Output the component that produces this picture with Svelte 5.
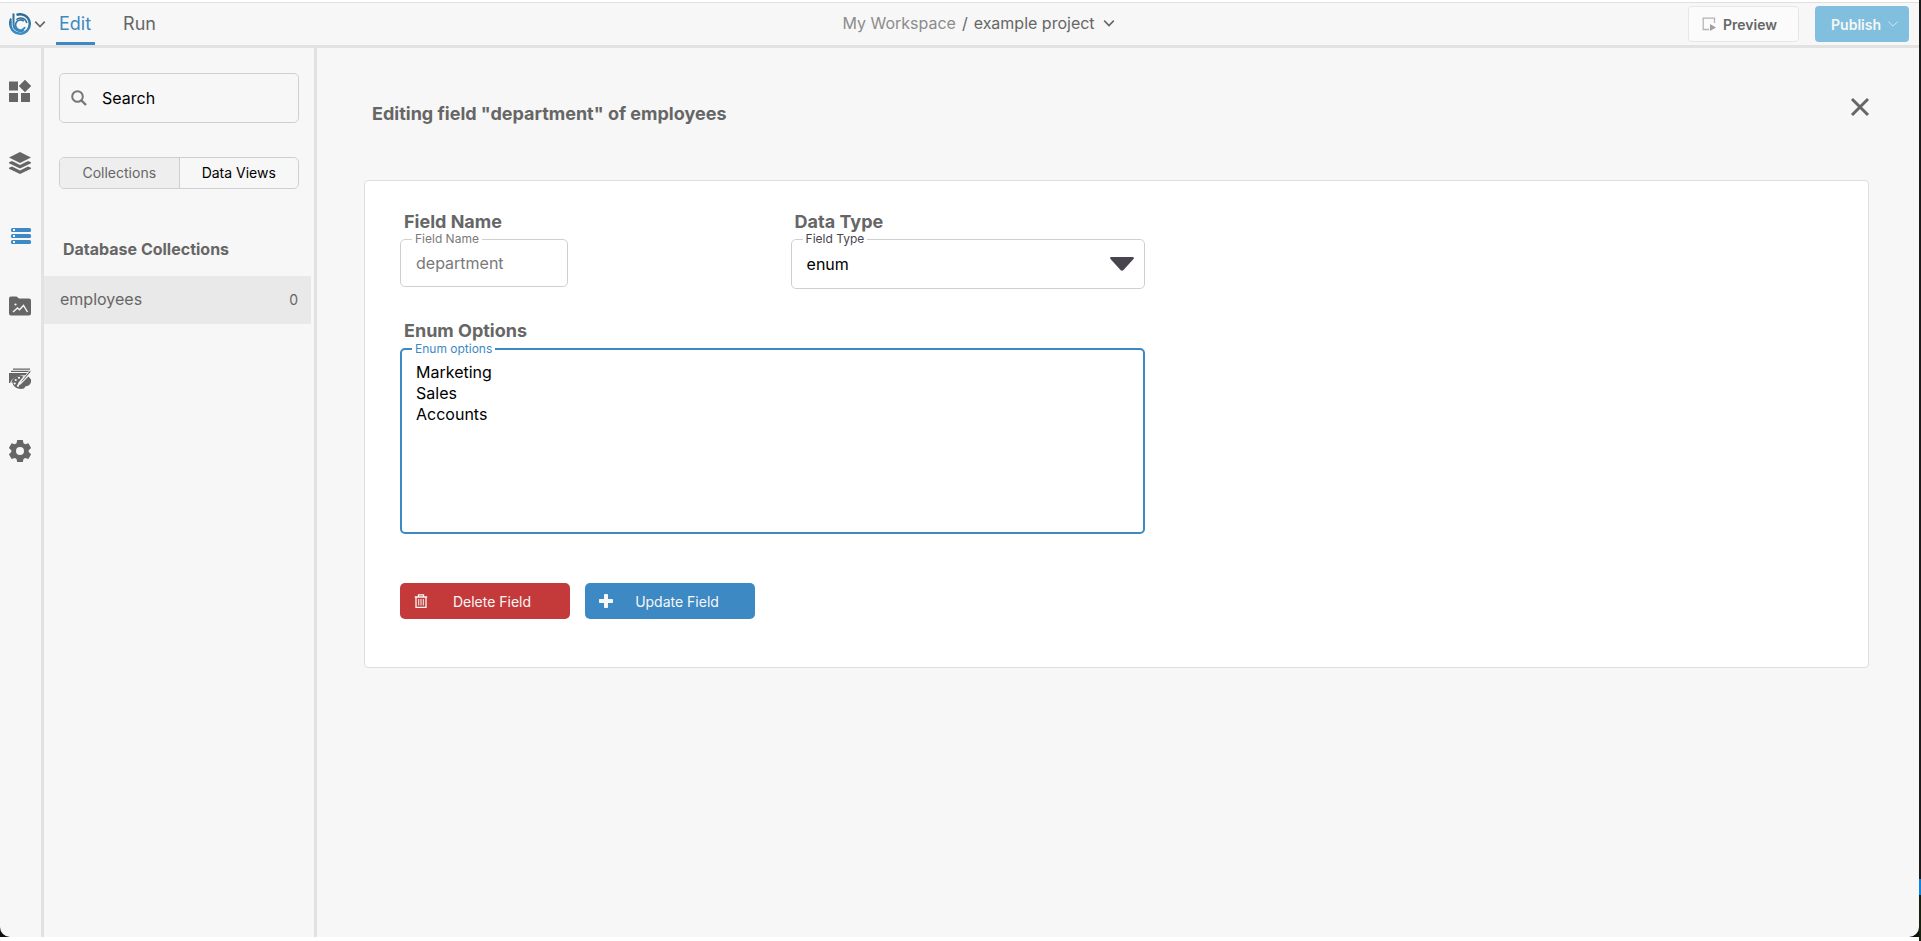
<script lang="ts">
  type RailItem = 'components' | 'layers' | 'database' | 'media' | 'design' | 'settings'
  type Tab = 'Edit' | 'Run'
  type DataTab = 'Collections' | 'Data Views'

  const railItems: RailItem[] = ['components', 'layers', 'database', 'media', 'design', 'settings']
  const tabs: Tab[] = ['Edit', 'Run']
  const dataTabs: DataTab[] = ['Collections', 'Data Views']
  const fieldTypes = ['enum', 'text', 'number', 'boolean', 'date']
  const collections = [{ name: 'employees', count: 0 }]

  let activeRail = $state<RailItem>('database')
  let activeTab = $state<Tab>('Edit')
  let dataTab = $state<DataTab>('Collections')
  let selected = $state('employees')
  let search = $state('')
  let fieldType = $state('enum')
  let fieldName = $state('department')
  let enumOptions = $state('Marketing\nSales\nAccounts')
</script>

{#snippet chevron(size: number)}
  <svg width={size} height={size} viewBox="0 0 12 12" fill="none" stroke="currentColor" stroke-width="1.6">
    <path d="M1.2 3.6 6 8.6l4.8-5" />
  </svg>
{/snippet}

<div class="desktop">
  <div class="stage">
    <div class="window">
      <header class="topbar">
        <div class="topbar-left">
          <button class="logo" aria-label="Main menu">
            <svg width="24" height="24" viewBox="0 0 24 24" fill="none">
              <defs>
                <linearGradient id="brand" gradientUnits="userSpaceOnUse" x1="0" y1="1" x2="0" y2="23">
                  <stop offset="0" stop-color="#2b6690" />
                  <stop offset="1" stop-color="#3d8fca" />
                </linearGradient>
              </defs>
              <g stroke="url(#brand)">
                <path d="M8.500 2.900A9.700 9.700 0 1 1 2.800 9" stroke-width="2.500" />
                <path d="M5.500 1.500v11a6.900 6.900 0 0 0 10.500 5.600" stroke-width="2" />
                <path d="M3 6.500A9.700 9.700 0 0 0 2.400 13" stroke-width="2" />
                <path d="M8.300 7.800A6.300 6.300 0 0 1 18.800 11" stroke-width="1.500" />
                <path d="M17 15.200a5 5 0 1 1-1.200-6" stroke-width="1.700" />
              </g>
            </svg>
            {@render chevron(12)}
          </button>
          <nav class="tabs">
            {#each tabs as t (t)}
              <button class:active={activeTab === t} onclick={() => (activeTab = t)}>{t}</button>
            {/each}
          </nav>
        </div>

        <div class="crumbs">
          <a href="#workspace">My Workspace</a>
          <span>/</span>
          <button>example project {@render chevron(12)}</button>
        </div>

        <div class="topbar-right">
          <button class="preview">
            <svg width="14" height="14" viewBox="0 0 14 14">
              <path d="M12.500 6V1.200H1.200v11.300H7" fill="none" stroke="#b4b4b4" stroke-width="1.300" />
              <path d="M8 7l6 3.500L8 14z" fill="#a0a0a0" />
            </svg>
            Preview
          </button>
          <button class="publish">
            Publish
            <svg width="10" height="10" viewBox="0 0 10 10" fill="none" stroke="#cfe8f3" stroke-width="1">
              <path d="M.4 2.600 5 7.200l4.600-4.600" />
            </svg>
          </button>
        </div>
      </header>

      <div class="body">
        <nav class="rail">
          {#each railItems as item (item)}
            <button class:active={activeRail === item} aria-label={item} onclick={() => (activeRail = item)}>
              <svg width="24" height="24" viewBox="0 0 24 24" fill="currentColor">
                {#if item === 'components'}
                  <path d="M1 2.500h9v9H1zM1 14h9v9H1zM13 14h9v9h-9zM17 .8l6.200 6.200-6.200 6.200L10.800 7z" />
                {:else if item === 'layers'}
                  <path d="M12 1l11 5.500-11 5.500L1 6.500z" />
                  <path d="M1 11.300l3-1.300 8 4 8-4 3 1.300v1L12 17.600 1 12.300z" />
                  <path d="M1 16.800l3-1.300 8 4 8-4 3 1.300v1L12 23 1 17.800z" />
                {:else if item === 'database'}
                  {#each [5, 11, 17] as y (y)}
                    <rect x="3" {y} width="20" height="4" rx="1.500" />
                    <rect x="5" y={y + 1} width="2" height="2" fill="#f7f7f7" />
                  {/each}
                {:else if item === 'media'}
                  <path d="M3 1.500h5.500l2.500 2h10a2 2 0 0 1 2 2v13a2 2 0 0 1-2 2H3a2 2 0 0 1-2-2v-15a2 2 0 0 1 2-2z" />
                  <path d="M5 17l4.500-4 2 1.700 4-4.200 4 6.500" fill="none" stroke="#f7f7f7" stroke-width="1.400" />
                  <circle cx="7.500" cy="9.500" r="1.100" fill="#f7f7f7" />
                {:else if item === 'design'}
                  <path d="M5 1.500h17v1.200H5zM3 3.800h18V5H3zM1 6h18v2.500C9 7.500 3.500 12 2.200 16H1z" />
                  <path d="M3.500 15.500c1-5 7-8 12-6l-5 6-1 3 3-1 8-8 2.500 3c.500 3-1 6-4 6.500-2 .2-1.800 1-3 2.500-5 1.500-11-1-11.500-6z" />
                  <path d="M22.500 2.500L14 13l-2.500 3.500L15 14l8-9z" stroke="#f7f7f7" stroke-width=".9" />
                  <g fill="#f7f7f7">
                    <circle cx="6.700" cy="16.500" r="1.100" />
                    <circle cx="7.700" cy="13" r="1.100" />
                    <circle cx="11" cy="10.800" r="1.100" />
                    <circle cx="10" cy="18.800" r="1.100" />
                  </g>
                {:else}
                  <path
                    fill-rule="evenodd"
                    d="M9.200 1h5.600l.7 3.300 1.700 1 3.200-1 2.700 4.700-2.400 2.200v1.800l2.400 2.200-2.700 4.700-3.200-1-1.700 1-.7 3.100H9.200l-.7-3.100-1.700-1-3.200 1L.9 15.200 3.300 13v-1.800L.9 9l2.700-4.700 3.200 1 1.700-1zM12 8a4 4 0 1 0 0 8 4 4 0 0 0 0-8z"
                  />
                {/if}
              </svg>
            </button>
          {/each}
        </nav>

        <aside class="sidebar">
          <label class="search">
            <svg width="16" height="16" viewBox="0 0 16 16" fill="none" stroke="#777" stroke-width="2">
              <circle cx="6.500" cy="6.500" r="5.300" />
              <path d="M10.500 10.500l4.500 4.500" stroke-width="2.400" />
            </svg>
            <input type="text" placeholder="Search" aria-label="Search" bind:value={search} />
          </label>

          <div class="segmented">
            {#each dataTabs as t (t)}
              <button class:active={dataTab === t} onclick={() => (dataTab = t)}>{t}</button>
            {/each}
          </div>

          <h2>Database Collections</h2>
          <ul>
            {#each collections as c (c.name)}
              <li>
                <button class:active={selected === c.name} onclick={() => (selected = c.name)}>
                  {c.name}
                  <span class="count">{c.count}</span>
                </button>
              </li>
            {/each}
          </ul>
        </aside>

        <main>
          <div class="title">
            <h1>Editing field "department" of employees</h1>
            <button class="close" aria-label="Close">
              <svg width="20" height="20" viewBox="0 0 20 20" fill="none" stroke="currentColor" stroke-width="3">
                <path d="M2 2l16 16M18 2L2 18" />
              </svg>
            </button>
          </div>

          <section class="card">
            <form onsubmit={(e) => e.preventDefault()}>
              <div class="columns">
                <div>
                  <h3>Field Name</h3>
                  <div class="outlined name">
                    <label for="field-name">Field Name</label>
                    <input id="field-name" type="text" bind:value={fieldName} />
                  </div>
                </div>
                <div>
                  <h3>Data Type</h3>
                  <div class="outlined type">
                    <label for="field-type">Field Type</label>
                    <select id="field-type" bind:value={fieldType}>
                      {#each fieldTypes as type (type)}
                        <option>{type}</option>
                      {/each}
                    </select>
                    <svg class="arrow" width="24" height="14" viewBox="0 0 24 14">
                      <path d="M1 0h22q1.500.5.500 2L13.500 13q-1.500 1.500-3 0L.5 2Q-.5.500 1 0z" fill="#49454f" />
                    </svg>
                  </div>
                </div>
              </div>

              <h3>Enum Options</h3>
              <div class="outlined options">
                <label for="enum-options">Enum options</label>
                <textarea id="enum-options" bind:value={enumOptions}></textarea>
              </div>

              <div class="actions">
                <button class="delete" type="button">
                  <svg width="14" height="14" viewBox="0 0 14 14" fill="none" stroke="currentColor">
                    <path d="M.8 3h12.400M4.500 3V.8h5V3M2 3v10.400h10V3" stroke-width="1.300" />
                    <path d="M4.700 5v6.500M7 5v6.500M9.300 5v6.500" />
                  </svg>
                  <span>Delete Field</span>
                </button>
                <button class="update" type="submit">
                  <svg width="14" height="14" viewBox="0 0 14 14" fill="currentColor">
                    <path d="M5 .7Q5 0 5.700 0h2.600Q9 0 9 .7V5h4.300q.7 0 .7.7v2.600q0 .7-.7.7H9v4.300q0 .7-.7.7H5.700Q5 14 5 13.300V9H.7Q0 9 0 8.300V5.700Q0 5 .7 5H5z" />
                  </svg>
                  <span>Update Field</span>
                </button>
              </div>
            </form>
          </section>
        </main>
      </div>
    </div>
  </div>
  <div class="edge"></div>
</div>

<style>
  :global(body) {
    margin: 0;
    background: #fff;
  }
  .desktop {
    display: flex;
    min-height: 100vh;
    font-family: Inter, 'Liberation Sans', sans-serif;
    font-size: 16px;
    color: #666;
  }
  .desktop *,
  .desktop *::before {
    box-sizing: border-box;
  }
  .stage {
    display: flex;
    flex: 1;
    margin-bottom: 4px;
    background: #0b120c;
  }
  .edge {
    width: 2px;
    background: linear-gradient(#1b1b1b 879px, #0a84e0 879px 895px, #14220f 895px);
  }
  .window {
    display: flex;
    flex: 1;
    flex-direction: column;
    background: #f7f7f7;
    border-top: 2px solid #fff;
    border-radius: 0 0 10px 10px;
    overflow: hidden;
  }
  button {
    padding: 0;
    border: 0;
    background: transparent;
    color: inherit;
    font: inherit;
    cursor: pointer;
  }
  svg {
    display: block;
    flex: none;
  }
  h1,
  h2,
  h3 {
    margin: 0;
    font-weight: 700;
  }

  .topbar {
    display: grid;
    grid-template-columns: 1fr auto 1fr;
    height: 46px;
    border-top: 1px solid #e0e0e0;
    border-bottom: 3px solid #e2e2e2;
  }
  .topbar-left {
    display: flex;
    padding-left: 8px;
  }
  .logo {
    display: flex;
    align-items: center;
    gap: 2px;
    margin-right: 10px;
  }
  .tabs {
    display: flex;
    gap: 16px;
  }
  .tabs button {
    padding: 0 4px 2px 3px;
    border-bottom: 3px solid transparent;
    border-top: 3px solid transparent;
    font-size: 18px;
  }
  .tabs button + button {
    padding: 0 12px 2px;
  }
  .tabs button.active {
    border-bottom-color: #3d89c4;
    color: #3d89c4;
  }
  .crumbs {
    display: flex;
    align-items: center;
    gap: 6px;
    padding: 0 0 2px 38px;
  }
  .crumbs a {
    color: #8c8c8c;
    text-decoration: none;
  }
  .crumbs button {
    display: flex;
    align-items: center;
    gap: 8px;
  }
  .topbar-right {
    display: flex;
    align-items: center;
    justify-content: flex-end;
    gap: 16px;
    padding-right: 10px;
    font-size: 14px;
    font-weight: 600;
  }
  .preview,
  .publish {
    display: flex;
    align-items: center;
    height: 36px;
    border-radius: 4px;
  }
  .preview {
    gap: 7px;
    padding: 0 21px 0 13px;
    border: 1px solid #e6e6e6;
    background: #fbfbfb;
  }
  .publish {
    gap: 7px;
    padding: 0 11px 0 16px;
    background: #80bfdd;
    color: #f7f7f7;
  }

  .body {
    display: flex;
    flex: 1;
  }
  .rail {
    display: flex;
    flex-direction: column;
    width: 44px;
    padding-top: 7px;
    border-right: 3px solid #e2e2e2;
  }
  .rail button {
    display: flex;
    align-items: center;
    height: 72px;
    padding-left: 8px;
  }
  .rail button.active {
    color: #3d89c4;
  }
  .sidebar {
    width: 273px;
    padding: 25px 3px 0 0;
    border-right: 3px solid #e2e2e2;
  }
  .search {
    display: flex;
    align-items: center;
    gap: 15px;
    height: 50px;
    margin: 0 12px 0 15px;
    padding: 0 11px;
    border: 1px solid #cfcfcf;
    border-radius: 5px;
  }
  .search input {
    flex: 1;
    min-width: 0;
    padding: 0;
    border: 0;
    outline: 0;
    background: transparent;
    font: inherit;
    color: #000;
  }
  .search input::placeholder {
    color: #000;
    opacity: 1;
  }
  .segmented {
    display: flex;
    height: 32px;
    margin: 34px 12px 0 15px;
    border: 1px solid #cfcfcf;
    border-radius: 5px;
    overflow: hidden;
  }
  .segmented button {
    flex: 1;
    padding-bottom: 2px;
    font-size: 14px;
    color: #000;
  }
  .segmented button + button {
    border-left: 1px solid #cfcfcf;
  }
  .segmented button.active {
    background: #eee;
    color: #666;
  }
  h2 {
    margin: 48px 0 15px 19px;
    font-size: 16px;
    line-height: 24px;
  }
  ul {
    margin: 0;
    padding: 0;
    list-style: none;
  }
  li button {
    display: flex;
    align-items: center;
    justify-content: space-between;
    width: 100%;
    height: 48px;
    padding: 0 13px 2px 16px;
  }
  li button.active {
    background: #e9e9e9;
  }
  .count {
    font-size: 14px;
  }

  main {
    flex: 1;
    padding: 44px 50px 0 47px;
  }
  .title {
    display: flex;
    align-items: flex-start;
    justify-content: space-between;
    height: 88px;
    padding-left: 8px;
  }
  h1 {
    margin-top: 10px;
    font-size: 18px;
    line-height: 24px;
  }
  .close {
    margin: 5px -1px 0 0;
  }
  .card {
    padding: 29px 35px 48px;
    border: 1px solid #dedede;
    border-radius: 4px;
    background: #fff;
  }
  form {
    width: 52%;
    min-width: 480px;
  }
  .columns {
    display: grid;
    grid-template-columns: 1fr 1fr;
    gap: 36px;
    margin-bottom: 30px;
  }
  h3 {
    margin: 0 0 5px 4px;
    font-size: 18px;
    line-height: 24px;
  }
  .outlined {
    position: relative;
    border: 1px solid #cfcfcf;
    border-radius: 5px;
  }
  .outlined label {
    position: absolute;
    top: -8px;
    left: 11px;
    padding: 0 3px;
    background: #fff;
    font-size: 12px;
    line-height: 14px;
    color: #7a7a7a;
  }
  .outlined input,
  .outlined select,
  .outlined textarea {
    display: block;
    width: 100%;
    margin: 0;
    padding: 0 15px;
    border: 0;
    outline: 0;
    background: transparent;
    font: inherit;
    color: #000;
  }
  .outlined.name {
    width: 168px;
  }
  .outlined.name input {
    height: 46px;
    color: #7a7a7a;
  }
  .outlined.type label {
    color: #49454f;
  }
  .outlined select {
    height: 48px;
    appearance: none;
  }
  .arrow {
    position: absolute;
    top: 17px;
    right: 10px;
    pointer-events: none;
  }
  .outlined.options {
    border: 2px solid #3d89c4;
  }
  .outlined.options label {
    left: 10px;
    color: #3d89c4;
  }
  .outlined textarea {
    height: 182px;
    padding: 12px 14px;
    line-height: 21px;
    resize: none;
  }
  .actions {
    display: flex;
    gap: 15px;
    margin-top: 49px;
  }
  .actions button {
    display: flex;
    align-items: center;
    width: 170px;
    height: 36px;
    padding: 0 14px;
    border-radius: 5px;
    font-size: 14px;
    color: #f7f7f7;
  }
  .actions span {
    flex: 1;
  }
  .delete {
    background: #c43a3a;
  }
  .update {
    background: #3d89c4;
  }
</style>
